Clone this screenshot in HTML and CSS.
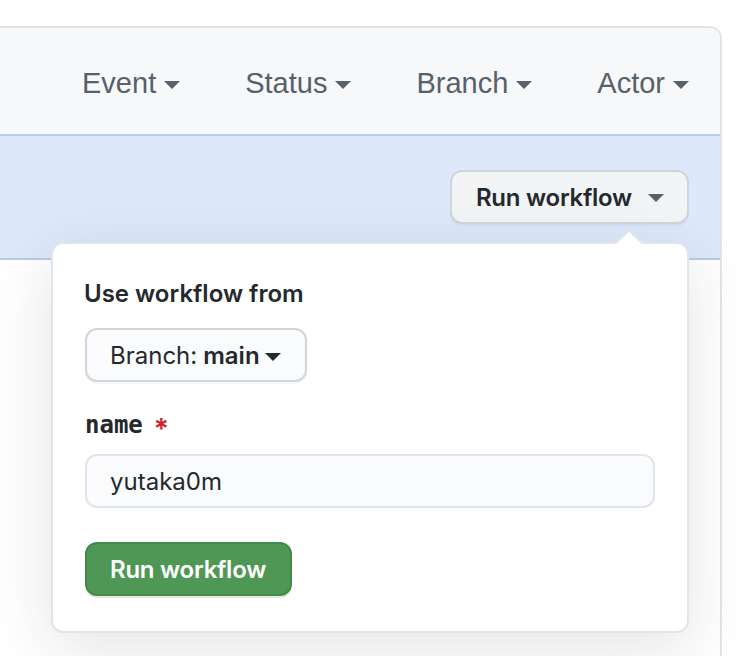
FILE: index.html
```html
<!DOCTYPE html>
<html>
<head>
<meta charset="utf-8">
<link rel="stylesheet" href="styles.css">
</head>
<body>
<div class="box">
  <div class="filters">
    <span class="filter">Event<span class="caret"></span></span>
    <span class="filter">Status<span class="caret"></span></span>
    <span class="filter">Branch<span class="caret"></span></span>
    <span class="filter">Actor<span class="caret"></span></span>
  </div>
  <div class="banner">
    <div class="dropdown">
      <button class="btn">Run workflow<span class="caret caret-btn"></span></button>
      <div class="menu">
        <div class="menu-title">Use workflow from</div>
        <button class="btn btn-branch">Branch: <b>main</b><span class="caret caret-branch"></span></button>
        <div class="field-label"><span class="mono">name</span><span class="req">*</span></div>
        <div class="input">yutaka0m</div>
        <button class="btn btn-primary">Run workflow</button>
      </div>
    </div>
  </div>
  <div class="list"></div>
</div>
</body>
</html>
```
FILE: styles.css
```css
html, body {
  margin: 0;
  padding: 0;
  background: #ffffff;
  height: 656px;
  overflow: hidden;
}
body {
  font-family: Inter, "Liberation Sans", sans-serif;
  color: #24292e;
}
.box {
  margin: 26px 28px 0 -20px;
  border: 2px solid #e1e4e8;
  border-radius: 0 12px 0 0;
  height: 700px;
}
.filters {
  height: 106px;
  background: #f6f8fa;
  border-bottom: 2px solid #b9cce6;
  border-radius: 0 10px 0 0;
  display: flex;
  justify-content: flex-end;
  align-items: center;
  gap: 65px;
  padding-right: 31px;
}
.filter {
  font-family: "Liberation Sans", Arial, sans-serif;
  font-size: 29px;
  color: #586069;
  display: flex;
  align-items: center;
  padding-top: 4px;
}
.caret {
  display: inline-block;
  width: 0;
  height: 0;
  border-top: 8px solid #586069;
  border-left: 8px solid transparent;
  border-right: 8px solid transparent;
  margin-left: 7px;
  margin-top: 3px;
}
.filter .caret {
  margin-left: 8px;
}
.banner {
  height: 122px;
  background: #dde9fb;
  border-bottom: 2px solid #b9cce6;
  display: flex;
  justify-content: flex-end;
  align-items: center;
  padding-right: 31px;
}
.dropdown {
  position: relative;
}
.btn {
  font-family: Inter, "Liberation Sans", sans-serif;
  font-size: 24px;
  font-weight: 600;
  letter-spacing: -0.25px;
  color: #24292e;
  height: 54px;
  padding: 0 23px 0 24px;
  background: #f3f4f6;
  border: 2px solid #d1d5da;
  border-radius: 12px;
  display: flex;
  align-items: center;
  box-shadow: 0 2px 0 rgba(27,31,35,0.04);
}
.caret-btn {
  margin-left: 16px;
  margin-top: 2px;
}
.menu {
  position: absolute;
  top: 72px;
  right: 0;
  width: 570px;
  padding: 32px 32px 35px 32px;
  background: #ffffff;
  border: 2px solid #e1e4e8;
  border-radius: 12px;
  box-shadow: 0 16px 64px rgba(27,31,35,0.12);
}
.menu::before,
.menu::after {
  content: "";
  position: absolute;
  width: 0;
  height: 0;
  border-left: 14px solid transparent;
  border-right: 14px solid transparent;
}
.menu::before {
  top: -15px;
  right: 44px;
  border-bottom: 13px solid #e1e4e8;
}
.menu::after {
  top: -12px;
  right: 44px;
  border-bottom: 13px solid #ffffff;
}
.menu-title {
  font-size: 24px;
  font-weight: 600;
  line-height: 36px;
  margin-top: 0;
  margin-left: -1px;
}
.btn-branch {
  margin-top: 16px;
  background: #fafbfc;
  font-weight: 400;
  letter-spacing: 0;
  padding: 0 24px 0 23px;
}
.btn-branch b {
  font-weight: 600;
  margin-left: 6px;
}
.caret-branch {
  margin-left: 5px;
  border-top-color: #24292e;
}
.field-label {
  margin-top: 27px;
  line-height: 24px;
  display: flex;
  align-items: center;
}
.mono {
  font-family: "DejaVu Sans Mono", "Liberation Mono", monospace;
  font-weight: 700;
  font-size: 24px;
  letter-spacing: 0;
  color: #24292e;
}
.req {
  color: #cb2431;
  font-size: 28px;
  font-weight: 600;
  margin-left: 11px;
  line-height: 24px;
  padding-top: 8px;
}
.input {
  margin-top: 13px;
  height: 50px;
  border: 2px solid #e1e4e8;
  border-radius: 12px;
  background: #fafbfc;
  font-size: 24px;
  padding: 0 23px;
  display: flex;
  align-items: center;
  color: #24292e;
}
.btn-primary {
  margin-top: 34px;
  background: #4f9755;
  border-color: #418a4a;
  color: #ffffff;
  padding: 0 24px 0 23px;
  box-shadow: 0 2px 0 rgba(27,31,35,0.1);
}
.list {
  background: #ffffff;
}
```
